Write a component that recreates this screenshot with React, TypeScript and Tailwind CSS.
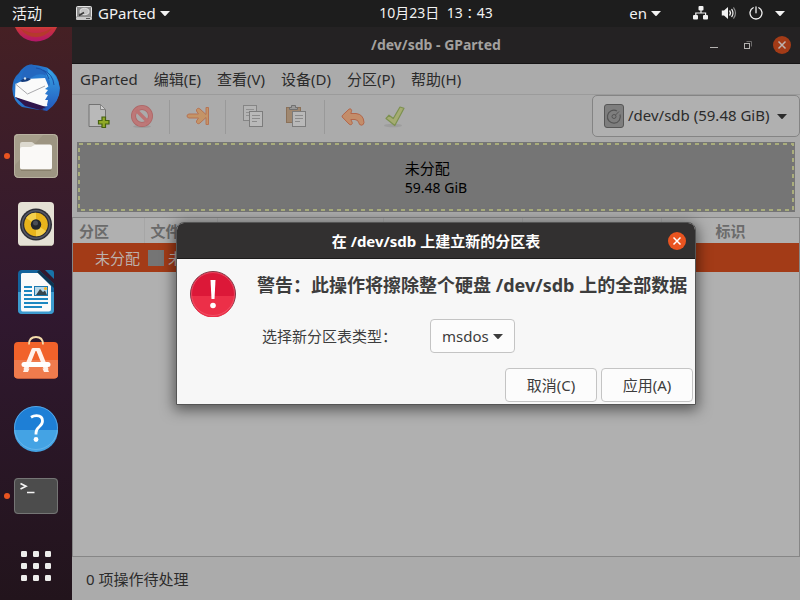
import React, { useState } from "react";

const Caret = ({ className = "" }: { className?: string }) => (
  <svg viewBox="0 0 10 5" className={`w-[10px] h-[5px] shrink-0 ${className}`} fill="currentColor">
    <path d="M0 0h10L5.6 4.7q-.6.5-1.2 0z" />
  </svg>
);

const Disk = () => (
  <svg viewBox="0 0 16 14" className="w-4 h-[14px]">
    <rect x=".5" y=".5" width="15" height="11" rx="1" fill="#8e8e8e" stroke="#e6e6e6" />
    <ellipse cx="8.500" cy="5.500" rx="4.500" ry="3.200" fill="#c4c4c4" stroke="#eee" strokeWidth=".8" />
    <path d="M3 9.500L8 6.500" stroke="#3a3a3a" strokeWidth="1.600" />
    <rect y="11" width="16" height="3" rx="1" fill="#c8c8c8" />
    <path d="M10 12.500h4" stroke="#555" />
  </svg>
);

const TopBar = () => (
  <header className="h-[27px] shrink-0 bg-[#1d1d1d] text-[#f2f2f2] flex items-center pb-px whitespace-nowrap">
    <button className="w-[72px] shrink-0 pl-3 text-left">活动</button>
    <div className="flex-1 grid grid-cols-[1fr_auto_1fr] items-center">
      <button className="flex items-center pl-1">
        <Disk />
        <span className="ml-1.5 mr-1">GParted</span>
        <Caret />
      </button>
      <button className="text-sm">10月23日&nbsp; 13∶43</button>
      <div className="flex items-center justify-end pr-[15px]">
        <button className="flex items-center mr-8">
          <span className="mr-1">en</span>
          <Caret />
        </button>
        <button aria-label="System" className="flex items-center gap-3">
          <svg viewBox="0 0 16 14" className="w-4 h-[14px]" fill="#f2f2f2">
            <rect x="5.500" y="0" width="5" height="4.400" rx="1" />
            <rect x="0" y="9" width="5" height="4.400" rx="1" />
            <rect x="10" y="9" width="5" height="4.400" rx="1" />
            <path d="M7.400 4h1.200v2.400h4.600V9H12V7.600H3.400V9H2.200V6.400h5.200z" />
          </svg>
          <svg viewBox="0 0 16 14" className="w-4 h-[14px]" fill="none" stroke="#f2f2f2" strokeLinecap="round">
            <path d="M.8 4.500H3L7 1v12L3 9.500H.8z" fill="#f2f2f2" stroke="none" />
            <path d="M8.800 5q1.400 2 0 4" strokeWidth="1.400" />
            <path d="M10.800 3.400q2.400 3.600 0 7.200" strokeWidth="1.200" />
            <path d="M12.700 1.800q3.600 5.200 0 10.400" stroke="#8a8a8a" strokeWidth="1.200" />
          </svg>
          <svg viewBox="0 0 14 14" className="w-[14px] h-[14px]" fill="none" stroke="#f2f2f2" strokeWidth="1.300" strokeLinecap="round">
            <path d="M7 .8v6M4.200 1.700a6 6 0 1 0 5.600 0" />
          </svg>
          <Caret />
        </button>
      </div>
    </div>
  </header>
);

const Firefox = () => (
  <svg viewBox="0 0 48 48" className="w-12 h-12">
    <defs>
      <linearGradient id="ff" x1="0" y1="0" x2="0" y2="1">
        <stop offset=".5" stopColor="#e8782d" />
        <stop offset=".72" stopColor="#c8323c" />
        <stop offset="1" stopColor="#b3166a" />
      </linearGradient>
    </defs>
    <circle cx="24" cy="23" r="22.500" fill="url(#ff)" />
    <path d="M8 32q16 10 32 0-6 9-16 9T8 32z" fill="#b53a2c" />
  </svg>
);

const Thunderbird = () => (
  <svg viewBox="0 0 48 48" className="w-12 h-12">
    <defs>
      <linearGradient id="tb" x1="0" y1="0" x2="1" y2="1">
        <stop offset="0" stopColor="#1c5fb8" />
        <stop offset=".45" stopColor="#2a7fd4" />
        <stop offset="1" stopColor="#1d3f9b" />
      </linearGradient>
      <linearGradient id="tb2" x1="0" y1="0" x2="0" y2="1">
        <stop offset="0" stopColor="#38a7e6" />
        <stop offset="1" stopColor="#2257bd" />
      </linearGradient>
    </defs>
    <path d="M7 9Q.5 14 .3 25 .8 37 10 43l17 3 9-2Q48 37 47.800 24 47 10 35 3.500 26 1 18 .5 11 2 7 9z" fill="url(#tb)" />
    <path d="M3.500 20L14 15l19-1 5 12-2 16-8 1L3 33z" fill="#fafafa" />
    <path d="M3.500 20l12 10L33 22" fill="none" stroke="#a9a9ad" strokeWidth="1" />
    <path d="M3 33l31 10-6 3-15-4z" fill="#30154b" />
    <path d="M34 12q6 5 3 10l-4 3 3 1-3 4 3 1-3 5 3 0-1 5 1 2-6 3 5 1Q48 38 47.800 24 46 11 35 4q3 4-1 8z" fill="url(#tb2)" />
    <path d="M9 14Q12 1 20 .5l3 2q9 1 11 9-7-3-13 1-5 4-11 5z" fill="#2467bf" />
    <path d="M8 17q5-5 11-2-3 3-9 3z" fill="#143c7c" />
    <circle cx="13" cy="14.500" r="1.200" fill="#d7e4ef" />
    <path d="M24 4q10 1 13 11M31 6q10 4 11 15" stroke="#1a4fa4" fill="none" />
  </svg>
);

const Files = () => (
  <svg viewBox="0 0 48 48" className="w-12 h-12">
    <rect x="2" y="2" width="44" height="44" rx="4.500" fill="#9d9582" />
    <path d="M2 34L32 2H6a4 4 0 0 0-4 4z" fill="#a69e8b" />
    <rect x="2.500" y="2.500" width="43" height="43" rx="4" fill="none" stroke="#b9b2a1" />
    <path d="M8 24V12q0-2 2-2h9.500q1.500 0 2.500 1.500L24 13z" fill="#dcd9cf" />
    <path d="M8 17q0-2 2-2h9l4.500-2.500H38q2 0 2 2V35.500q0 2-2 2H10q-2 0-2-2z" fill="#faf9f7" />
    <path d="M9 38.200h30" stroke="#807863" />
  </svg>
);

const Rhythmbox = () => (
  <svg viewBox="0 0 48 48" className="w-12 h-12">
    <rect x="6" y="2" width="36" height="44" rx="4" fill="#e5e1d5" />
    <path d="M8 45.500h32" stroke="#b9b4a4" />
    <circle cx="24" cy="24.500" r="16" fill="#2d2e35" />
    <circle cx="24" cy="24.500" r="13.800" fill="none" stroke="#555865" strokeWidth="1.500" />
    <circle cx="24" cy="24.500" r="11.800" fill="#e8b41c" />
    <path d="M24 24.500L14 18a12 12 0 0 1 10-5.300zM24 24.500l10 6.500a12 12 0 0 1-10 5.300z" fill="#f5d04c" />
    <circle cx="24" cy="24.500" r="5.200" fill="#24262b" />
    <circle cx="23.500" cy="23" r="2.500" fill="#4b4d55" />
  </svg>
);

const Writer = () => (
  <svg viewBox="0 0 48 48" className="w-12 h-12">
    <path d="M10 2h17l15 14v26q0 4-4 4H10q-4 0-4-4V6q0-4 4-4z" fill="#14639c" />
    <path d="M6 24h36v18q0 4-4 4H10q-4 0-4-4z" fill="#3d9bcf" />
    <path d="M10.500 5H26l13 13v23q0 2.500-2.500 2.500h-26Q9 43.500 9 41V6.500Q9 5 10.500 5z" fill="#fafafa" />
    <path d="M33 2h6q3 0 3 3v6z" fill="#1873a8" />
    <path d="M27 2l15 14v4L25 4z" fill="#0d3550" />
    <path d="M12 19h8M12 23h8M12 27h8M12 31h24M12 35h24M12 39h18" stroke="#1c87c1" strokeWidth="2" />
    <rect x="22.500" y="18.500" width="13" height="9" fill="#b8d8e8" stroke="#1b79b0" />
    <path d="M24 27l4-6 3 3 2-1.500 2 4.500z" fill="#37474f" />
    <circle cx="33.500" cy="20.500" r="1.600" fill="#f4b62c" />
  </svg>
);

const Software = () => (
  <svg viewBox="0 0 48 48" className="w-12 h-12">
    <rect x="2" y="6" width="44" height="36.500" rx="4" fill="#f1622a" />
    <path d="M2 24h44v14.500q0 4-4 4H6q-4 0-4-4z" fill="#ef7b4d" />
    <path d="M17 8.500q0-7.500 7-7.500t7 7.500" fill="none" stroke="#f4dcab" strokeWidth="1.800" />
    <path d="M22 13L13.500 34M26 13L34.500 34" stroke="#fff1ea" strokeWidth="4.500" />
    <path d="M20.500 12h7l1 3h-9zM11 36l1.500-3.500h5L16 36zM37 36l-1.500-3.500h-5L32 36z" fill="#fff1ea" />
    <path d="M12 28.500h24" stroke="#fff" strokeWidth="5" strokeLinecap="round" />
  </svg>
);

const Help = () => (
  <svg viewBox="0 0 48 48" className="w-12 h-12">
    <circle cx="24" cy="24" r="22" fill="#1e7fd6" />
    <path d="M2 26h44a22 22 0 0 1-44 0z" fill="#44a3e4" />
    <circle cx="24" cy="24" r="21.500" fill="none" stroke="#7cc0ee" strokeOpacity=".6" />
    <path d="M19 13.300q2.500-1.600 5.500-1.600 6 0 6 5.300 0 3-3 5.500-3.500 2.800-3.500 6.500v1.500" fill="none" stroke="#fff" strokeWidth="2.800" />
    <circle cx="24" cy="35.500" r="2.400" fill="#fff" />
  </svg>
);

const Terminal = () => (
  <svg viewBox="0 0 48 48" className="w-12 h-12">
    <rect x="2" y="6" width="44" height="36" rx="4" fill="#4c4c4c" />
    <rect x="2.500" y="6.500" width="43" height="35" rx="3.500" fill="none" stroke="#757575" />
    <path d="M8.500 11.500l5.500 2.800-5.500 2.800" fill="none" stroke="#f4f4f4" strokeWidth="1.700" />
    <path d="M15 20.500h7.500" stroke="#f4f4f4" strokeWidth="1.500" />
  </svg>
);

const AppsGrid = () => (
  <svg viewBox="0 0 30 30" className="w-[30px] h-[30px]" fill="#eeeeec">
    {[0, 12, 24].map((y) =>
      [0, 12, 24].map((x) => <rect key={`${x}-${y}`} x={x} y={y} width="6" height="6" rx="1.200" />)
    )}
  </svg>
);

const apps = [
  { name: "Firefox", icon: <Firefox /> },
  { name: "Thunderbird", icon: <Thunderbird /> },
  { name: "Files", icon: <Files />, running: true },
  { name: "Rhythmbox", icon: <Rhythmbox /> },
  { name: "Writer", icon: <Writer /> },
  { name: "Software", icon: <Software /> },
  { name: "Help", icon: <Help /> },
  { name: "Terminal", icon: <Terminal />, running: true },
];

const Dock = () => (
  <nav className="w-[72px] shrink-0 overflow-hidden flex flex-col justify-end bg-linear-to-b from-[#452024] via-[#30182f] to-[#22141c]">
    {apps.map((app) => (
      <button key={app.name} aria-label={app.name} className="relative h-[68px] shrink-0 flex items-center justify-center">
        {app.running && <span className="absolute left-1 w-1.5 h-1.5 rounded-full bg-[#e95420]" />}
        {app.icon}
      </button>
    ))}
    <button aria-label="Show Applications" className="h-[70px] pt-0.5 shrink-0 flex items-center justify-center">
      <AppsGrid />
    </button>
  </nav>
);

const CloseIcon = () => (
  <svg viewBox="0 0 18 18" className="w-[18px] h-[18px]" fill="none" stroke="currentColor" strokeWidth="1.500">
    <path d="M5.500 5.500l7 7M12.500 5.500l-7 7" />
  </svg>
);

const TitleBar = () => (
  <div className="h-[37px] shrink-0 bg-[#242223] border-b border-[#151415] text-[#a3a19f] grid grid-cols-[1fr_auto_1fr] items-center">
    <h1 className="col-start-2 font-bold text-sm">/dev/sdb - GParted</h1>
    <div className="flex items-center justify-end gap-4 pr-[9px]">
      <button aria-label="Minimize" className="w-[18px] h-[18px]">
        <svg viewBox="0 0 18 18"><path d="M5 11.500h8" stroke="#b4b2b0" /></svg>
      </button>
      <button aria-label="Restore" className="w-[18px] h-[18px]">
        <svg viewBox="0 0 18 18" fill="none">
          <path d="M7.500 5.500h5v5" stroke="#6c6a6a" />
          <rect x="5.500" y="7.500" width="5" height="5" stroke="#b4b2b0" />
        </svg>
      </button>
      <button aria-label="Close" className="w-[18px] h-[18px] rounded-full bg-[#a33b17] text-[#bdb3af]">
        <CloseIcon />
      </button>
    </div>
  </div>
);

const MenuBar = () => (
  <div className="h-[31px] shrink-0 flex items-center gap-4 px-2 border-b border-[#9b9b9b] whitespace-nowrap">
    {["GParted", "编辑(E)", "查看(V)", "设备(D)", "分区(P)", "帮助(H)"].map((item) => (
      <button key={item}>{item}</button>
    ))}
  </div>
);

const tools = [
  {
    name: "New",
    art: (
      <>
        <path d="M2 .500h11.500l5 5V22.500H2z" fill="#b9b9b9" stroke="#727272" />
        <path d="M13.500.500v5h5z" fill="#d0d0d0" stroke="#858585" />
        <path d="M15 13h3.500v3.500H22V20h-3.500v3.500H15V20h-3.500v-3.500H15z" fill="#91aa27" stroke="#456111" strokeWidth="1.200" />
      </>
    ),
  },
  {
    name: "Delete",
    art: (
      <>
        <ellipse cx="12" cy="22.500" rx="9" ry="1.500" fill="#9b9b9b" />
        <circle cx="12" cy="12" r="8.500" fill="none" stroke="#ad6666" strokeWidth="5" />
        <circle cx="12" cy="12" r="8.500" fill="none" stroke="#bd7878" strokeWidth="3.500" />
        <path d="M6 6l12 12" stroke="#bb7373" strokeWidth="3.500" />
      </>
    ),
  },
  {
    name: "Resize",
    divider: true,
    art: (
      <path d="M3 10h9.500L10.500 7q-.5-1.600 1-2.500 1.300-.6 2.400.4L20 10.500V3.500h2.500v17H20v-7l-6.100 5.600q-1.100 1-2.400.4-1.500-.9-1-2.500l2-3H3q-2-.4-2-2t2-2z" fill="#c49467" stroke="#b77353" />
    ),
  },
  {
    name: "Copy",
    divider: true,
    art: (
      <>
        <rect x="1.500" y="1.500" width="13" height="15" fill="#b4b4b4" stroke="#858585" />
        <path d="M4 5.500h8M4 8.500h8M4 11.500h5" stroke="#909090" />
        <rect x="7.500" y="7.500" width="13" height="15" fill="#b9b9b9" stroke="#7c7c7c" />
        <path d="M10 11.500h8M10 14.500h8M10 17.500h5" stroke="#8b8b8b" />
      </>
    ),
  },
  {
    name: "Paste",
    art: (
      <>
        <rect x="1.500" y="3.500" width="14" height="15" fill="#a08870" stroke="#8b7159" />
        <path d="M4.500 5.500v-2h2v-2h4v2h2v2z" fill="#999" stroke="#707070" />
        <rect x="7.500" y="7.500" width="13" height="15" fill="#b9b9b9" stroke="#7c7c7c" />
        <path d="M10 11.500h8M10 14.500h8M10 17.500h5" stroke="#8b8b8b" />
      </>
    ),
  },
  {
    name: "Undo",
    divider: true,
    art: (
      <path d="M1.200 13q-.4-1 .4-1.800L8 5.200q1.200-.9 2.200.2.700.9.300 1.900L9.800 9.500H15q7.500.8 8 9-.3 2.600-2.600 2.700-2.200-.2-2.600-2.500-.6-2.800-3.800-3.200H9.800l1.300 2.700q.6 1.500-.6 2.300-1.300.6-2.400-.4z" fill="#c38d6a" stroke="#b3664a" />
    ),
  },
  {
    name: "Apply",
    art: (
      <>
        <ellipse cx="9" cy="21.500" rx="9" ry="1.800" fill="#9d9d9d" />
        <path d="M2 14.500l3-3.300 4.300 3.300L16 3l4 1.200L10.800 21.500z" fill="#a5ac72" stroke="#7d9150" strokeWidth="1.200" strokeLinejoin="round" />
      </>
    ),
  },
];

const Toolbar = () => (
  <div className="h-[43px] shrink-0 flex items-stretch">
    <div className="flex flex-1 items-center pl-[5px]">
      {tools.map((tool) => (
        <React.Fragment key={tool.name}>
          {tool.divider && <span className="w-px h-[34px] bg-[#999] mx-1.5" />}
          <button aria-label={tool.name} className="w-[43px] h-9 flex items-center justify-center">
            <svg viewBox="0 0 24 26" className="w-6 h-[26px]">{tool.art}</svg>
          </button>
        </React.Fragment>
      ))}
    </div>
    <label className="relative flex items-center w-[208px] mb-px border border-[#848484] rounded-[5px] bg-[#b0b0b0]">
      <svg viewBox="0 0 20 24" className="absolute left-[11px] w-5 h-6 pointer-events-none" fill="none">
        <rect x=".500" y=".500" width="19" height="23" rx="2.500" fill="#7e7e7e" stroke="#565656" />
        <path d="M13 7a6.500 6.500 0 1 0 3 3.500" stroke="#555" strokeWidth="1.200" />
        <circle cx="10" cy="12.500" r="2" stroke="#555" />
        <path d="M11.500 11L15 7.500" stroke="#555" />
      </svg>
      <select aria-label="Device" className="appearance-none w-full h-full pb-0.5 pl-[35px] pr-6 outline-none">
        <option>/dev/sdb (59.48 GiB)</option>
      </select>
      <Caret className="absolute right-3 pointer-events-none" />
    </label>
  </div>
);

const DiskMap = () => (
  <div className="relative h-[70px] shrink-0 mt-1 mx-[5px] bg-[#757575] text-black text-sm flex items-center justify-center">
    <svg className="absolute inset-0 w-full h-full" fill="none" stroke="#a9ad7c" strokeWidth="2" strokeDasharray="4 4">
      <rect x="2" y="2" className="w-[calc(100%-4px)] h-[calc(100%-4px)]" />
    </svg>
    <div className="leading-[19px] pt-0.5">
      <p className="text-[15px] leading-[19px]">未分配</p>
      <p>59.48 GiB</p>
    </div>
  </div>
);

const PartitionTable = () => (
  <div className="flex-1 mt-[5px] border border-[#868686] bg-[#b0b0b0] overflow-hidden">
    <table className="w-full table-fixed text-left whitespace-nowrap">
      <thead>
        <tr className="h-[25px] text-[#6b6b6b]">
          <th className="w-[71px] p-0 pl-1.5 border-r border-[#a6a6a6]">分区</th>
          <th className="w-[73px] p-0 pl-1.5 border-r border-[#a6a6a6]">文件</th>
          <th className="w-[166px] p-0 border-r border-[#a6a6a6]" />
          <th className="w-[139px] p-0 border-r border-[#a6a6a6]" />
          <th className="w-[139px] p-0 border-r border-[#a6a6a6]" />
          <th className="p-0 pl-[54px]">标识</th>
        </tr>
      </thead>
      <tbody>
        <tr className="h-[29px] bg-[#a33b17] text-[#bcb1ac]">
          <td className="p-0 pl-[22px]">未分配</td>
          <td className="p-0 pl-1">
            <div className="flex items-center gap-1">
              <span className="w-4 h-4 bg-[#757575]" />
              未分配
            </div>
          </td>
          <td />
          <td />
          <td />
          <td />
        </tr>
      </tbody>
    </table>
  </div>
);

const Dialog = () => {
  const [type, setType] = useState("msdos");
  const button = "w-[92px] h-[34px] rounded-[4px] border border-[#c4c4c4] bg-[#fcfcfc] text-[#3d3d3d]";

  return (
    <div className="absolute inset-0 flex items-center justify-center">
      <section role="dialog" aria-labelledby="dialog-title" className="w-[520px] rounded-t-lg border border-[#555] bg-[#f7f7f7] text-[#3d3d3d] shadow-[0_3px_14px_2px_rgba(0,0,0,0.5)] overflow-hidden whitespace-nowrap">
        <div className="h-9 bg-[#323030] border-b border-[#1d1c1c] grid grid-cols-[1fr_auto_1fr] items-center">
          <h2 id="dialog-title" className="col-start-2 font-bold text-white">在 /dev/sdb 上建立新的分区表</h2>
          <button aria-label="Close" className="justify-self-end mr-[9px] w-[18px] h-[18px] rounded-full bg-[#e95420] text-white">
            <CloseIcon />
          </button>
        </div>
        <div className="flex gap-[21px] pl-[13px] pt-3">
          <svg viewBox="0 0 46 46" className="w-[46px] h-[46px] shrink-0">
            <circle cx="23" cy="23" r="22.500" fill="#dc1838" stroke="#803a47" />
            <path d="M1.500 25h43a21.500 21.500 0 0 1-43 0z" fill="#ec2f48" />
            <circle cx="23" cy="23" r="21.500" fill="none" stroke="#f1657a" strokeOpacity=".6" />
            <path d="M20.500 9h5l-1 19h-3z" fill="#fff" />
            <circle cx="23" cy="34.500" r="2.800" fill="#fff" />
          </svg>
          <div>
            <p className="text-lg leading-7 font-bold">警告：此操作将擦除整个硬盘 /dev/sdb 上的全部数据</p>
            <div className="mt-5 pl-[5px] flex items-center">
              <label htmlFor="table-type" className="w-[168px]">选择新分区表类型：</label>
              <div className="relative flex items-center">
                <select
                  id="table-type"
                  value={type}
                  onChange={(e) => setType(e.target.value)}
                  className="appearance-none w-[85px] h-[34px] pl-[11px] rounded-[4px] border border-[#c4c4c4] bg-[#fcfcfc] outline-none"
                >
                  <option>msdos</option>
                  <option>gpt</option>
                </select>
                <Caret className="absolute right-3 pointer-events-none" />
              </div>
            </div>
          </div>
        </div>
        <div className="flex justify-end gap-1 mt-[15px] px-0.5 pb-0.5">
          <button className={button}>取消(C)</button>
          <button className={button}>应用(A)</button>
        </div>
      </section>
    </div>
  );
};

const App = () => {
  return (
    <div className="h-screen flex flex-col overflow-hidden text-[15px] leading-5 font-['Noto_Sans','Noto_Sans_CJK_SC',sans-serif]">
      <TopBar />
      <div className="flex flex-1 min-h-0">
        <Dock />
        <main className="relative flex-1 min-w-0 flex flex-col bg-[#ababab] text-[#2b2b2b]">
          <TitleBar />
          <MenuBar />
          <Toolbar />
          <DiskMap />
          <PartitionTable />
          <footer className="h-[43px] shrink-0 flex items-center px-3.5">0 项操作待处理</footer>
          <Dialog />
        </main>
      </div>
    </div>
  );
};

export default App;
